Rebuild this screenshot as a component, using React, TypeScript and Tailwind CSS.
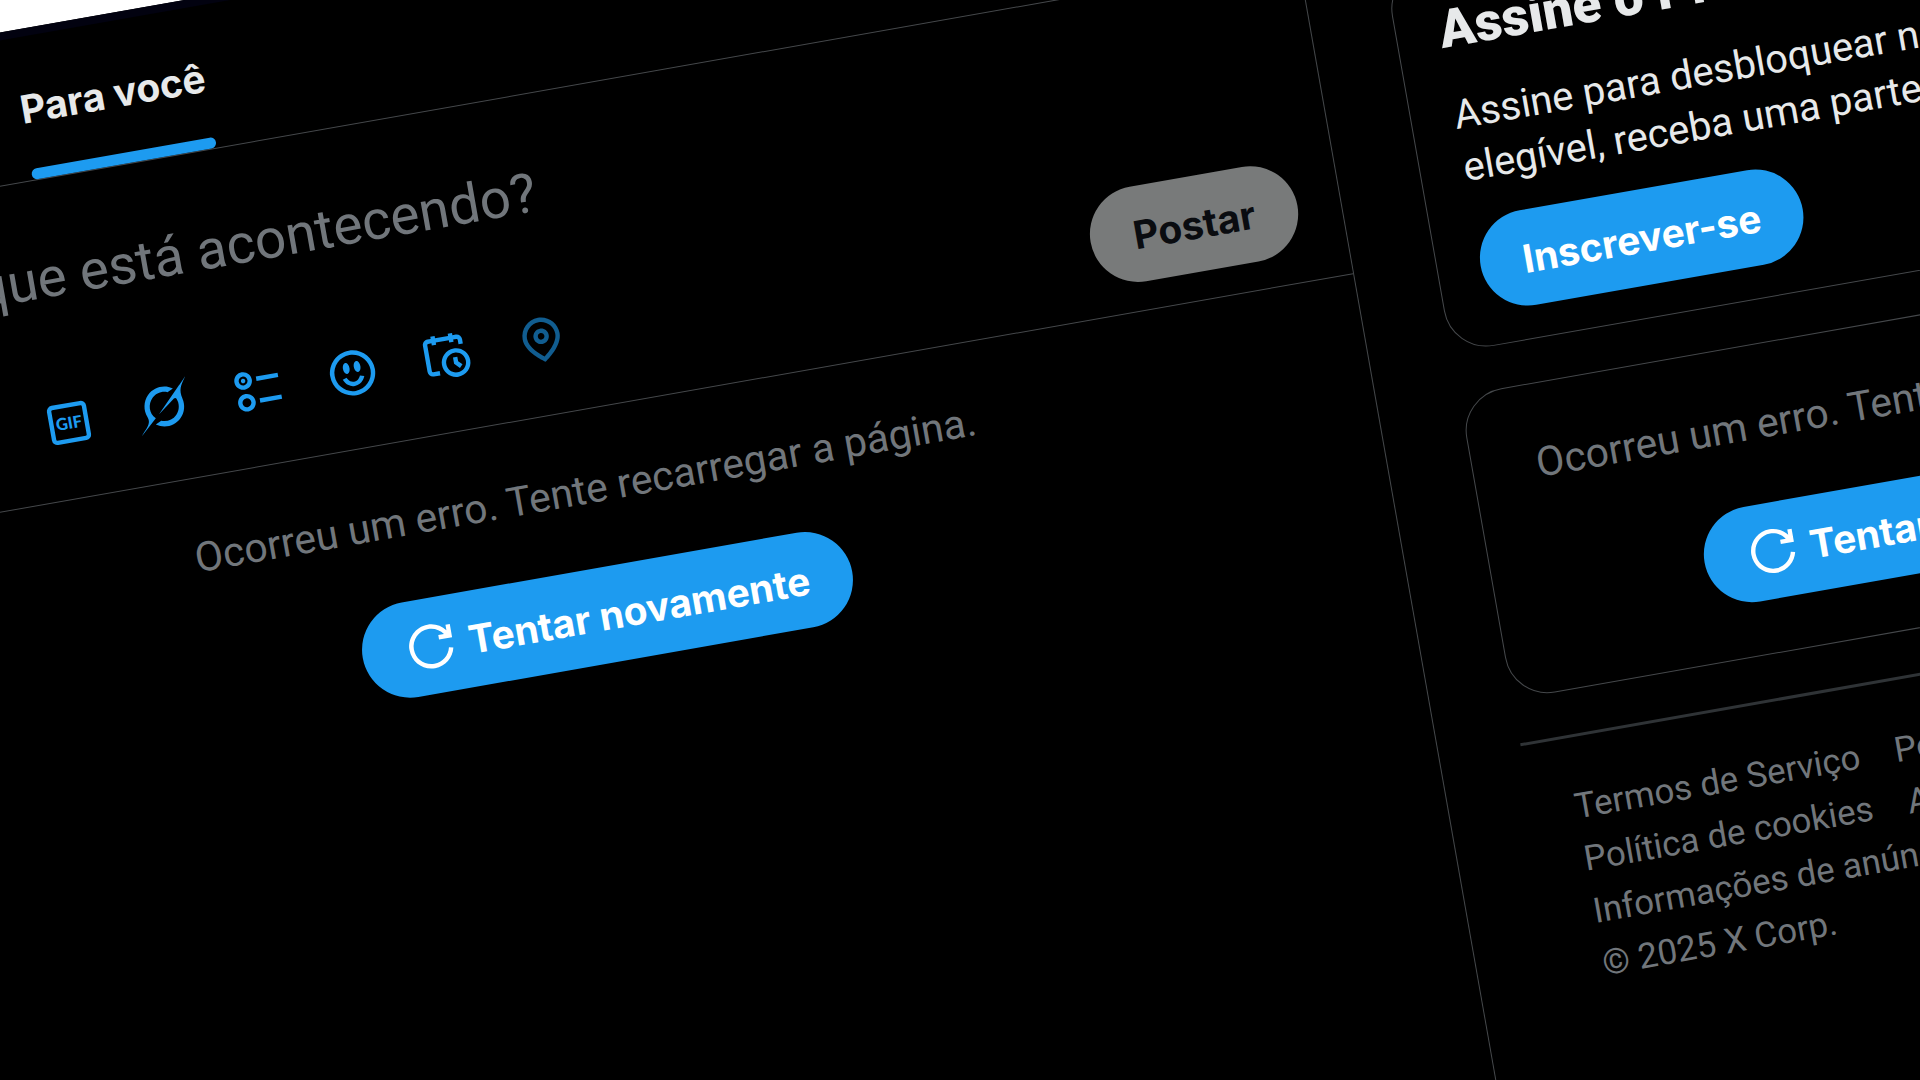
import type { ReactNode } from 'react';

const pill = "h-24 rounded-full px-[43px] flex items-center justify-center gap-[11px] font-['Inter'] text-[39px] font-bold whitespace-nowrap";

function Glyph({ d, viewBox = '0 0 24 24' }: { d: string; viewBox?: string }) {
  return (
    <svg viewBox={viewBox} className="w-[53px] h-[53px] shrink-0 fill-current" aria-hidden="true">
      <path d={d} />
    </svg>
  );
}

const icons = {
  grok: 'M12.745 20.54l10.97-8.19c.539-.4 1.307-.244 1.564.38 1.349 3.288.746 7.241-1.938 9.955-2.683 2.714-6.417 3.31-9.83 1.954l-3.728 1.745c5.347 3.697 11.84 2.782 15.898-1.324 3.219-3.255 4.216-7.692 3.284-11.693l.008.009c-1.351-5.878.332-8.227 3.782-13.031L33 0l-4.54 4.59v-.014L12.743 20.544m-2.263 1.987c-3.837-3.707-3.175-9.446.1-12.755 2.42-2.449 6.388-3.448 9.852-1.979l3.72-1.737c-.67-.49-1.53-1.017-2.515-1.387-4.455-1.854-9.789-.931-13.41 2.728-3.483 3.523-4.579 8.94-2.697 13.561 1.405 3.454-.899 5.898-3.22 8.364C1.49 30.2.666 31.074 0 32l10.478-9.466',
  poll: 'M6 5c-1.1 0-2 .895-2 2s.9 2 2 2 2-.895 2-2-.9-2-2-2zM2 7c0-2.209 1.79-4 4-4s4 1.791 4 4-1.79 4-4 4-4-1.791-4-4zm20 1H12V6h10v2zM6 15c-1.1 0-2 .895-2 2s.9 2 2 2 2-.895 2-2-.9-2-2-2zm-4 2c0-2.209 1.79-4 4-4s4 1.791 4 4-1.79 4-4 4-4-1.791-4-4zm20 1H12v-2h10v2zM7 7c0 .552-.45 1-1 1s-1-.448-1-1 .45-1 1-1 1 .448 1 1z',
  emoji: 'M8 9.5C8 8.119 8.672 7 9.5 7S11 8.119 11 9.5 10.328 12 9.5 12 8 10.881 8 9.5zm6.5 2.5c.828 0 1.5-1.119 1.5-2.5S15.328 7 14.5 7 13 8.119 13 9.5s.672 2.5 1.5 2.5zM12 16c-2.224 0-3.021-2.227-3.051-2.316l-1.897.633c.05.15 1.271 3.684 4.949 3.684s4.898-3.533 4.949-3.684l-1.896-.638c-.033.095-.83 2.322-3.053 2.322zm10.25-4.001c0 5.652-4.598 10.25-10.25 10.25S1.75 17.652 1.75 12 6.348 1.75 12 1.75 22.25 6.348 22.25 12zm-2 0c0-4.549-3.701-8.25-8.25-8.25S3.75 7.451 3.75 12s3.701 8.25 8.25 8.25 8.25-3.701 8.25-8.25z',
  schedule: 'M6 3V2h2v1h6V2h2v1h1.5C18.88 3 20 4.119 20 5.5v2h-2v-2c0-.276-.22-.5-.5-.5H16v1h-2V5H8v1H6V5H4.5c-.28 0-.5.224-.5.5v12c0 .276.22.5.5.5h3v2h-3C3.12 20 2 18.881 2 17.5v-12C2 4.119 3.12 3 4.5 3H6zm9.5 8c-2.49 0-4.5 2.015-4.5 4.5s2.01 4.5 4.5 4.5 4.5-2.015 4.5-4.5-2.01-4.5-4.5-4.5zM9 15.5C9 11.91 11.91 9 15.5 9s6.5 2.91 6.5 6.5-2.91 6.5-6.5 6.5S9 19.09 9 15.5zm5.5-2.5h2v2.086l1.71 1.707-1.42 1.414-2.29-2.293V13z',
  location: 'M12 7c-1.93 0-3.5 1.57-3.5 3.5S10.07 14 12 14s3.5-1.57 3.5-3.5S13.93 7 12 7zm0 5c-.827 0-1.5-.673-1.5-1.5S11.173 9 12 9s1.5.673 1.5 1.5S12.827 12 12 12zm0-10c-4.687 0-8.5 3.813-8.5 8.5 0 5.967 7.621 11.116 7.945 11.332l.555.37.555-.37c.324-.216 7.945-5.365 7.945-11.332C20.5 5.813 16.687 2 12 2zm0 17.77c-1.665-1.241-6.5-5.196-6.5-9.27C5.5 6.916 8.416 4 12 4s6.5 2.916 6.5 6.5c0 4.073-4.835 8.028-6.5 9.27z',
  retry: 'M12 4c-4.418 0-8 3.58-8 8s3.582 8 8 8c3.806 0 6.993-2.66 7.802-6.22l1.95.44C20.742 18.67 16.76 22 12 22 6.477 22 2 17.52 2 12S6.477 2 12 2c3.272 0 6.176 1.57 8 4V3.5h2v6h-6v-2h2.616C17.175 5.39 14.749 4 12 4z',
};

function ToolButton({ label, disabled, children }: { label: string; disabled?: boolean; children: ReactNode }) {
  return (
    <button type="button" aria-label={label} disabled={disabled} className="size-24 flex items-center justify-center text-[#1d9bf0] disabled:opacity-60">
      {children}
    </button>
  );
}

function ErrorState() {
  return (
    <div className="flex flex-col items-center gap-[52px] py-[53px]">
      <p className="text-[41px] text-[#71767b] whitespace-nowrap">Ocorreu um erro. Tente recarregar a página.</p>
      <button type="button" className={`${pill} bg-[#1d9bf0] text-white`}>
        <Glyph d={icons.retry} />
        Tentar novamente
      </button>
    </div>
  );
}

function Compose() {
  return (
    <form className="border-b border-[#45484b] pt-[66px] pb-7 pl-[177px] pr-[43px]" onSubmit={(e) => e.preventDefault()}>
      <textarea rows={1} aria-label="O que está acontecendo?" placeholder="O que está acontecendo?"
        className="block w-full h-16 mb-[66px] resize-none overflow-hidden bg-transparent outline-none text-[55px] leading-[64px] text-[#e7e9ea] placeholder:text-[#71767b]" />
      <div className="flex items-center justify-between">
        <div className="flex ml-[71px]">
          <ToolButton label="GIF">
            <svg viewBox="0 0 24 24" className="w-[53px] h-[53px]" aria-hidden="true">
              <rect x="4" y="4" width="16" height="16" rx="1.5" fill="none" stroke="currentColor" strokeWidth="2" />
              <text x="12" y="14.7" textAnchor="middle" fill="currentColor" className="font-['Lato'] font-black text-[7.5px]">GIF</text>
            </svg>
          </ToolButton>
          <ToolButton label="Grok"><Glyph d={icons.grok} viewBox="0 0 33 32" /></ToolButton>
          <ToolButton label="Enquete"><Glyph d={icons.poll} /></ToolButton>
          <ToolButton label="Emoji"><Glyph d={icons.emoji} /></ToolButton>
          <ToolButton label="Programar"><Glyph d={icons.schedule} /></ToolButton>
          <ToolButton label="Localização" disabled><Glyph d={icons.location} /></ToolButton>
        </div>
        <button type="submit" disabled className={`${pill} bg-[#787a7a] text-[#0a0c10]`}>Postar</button>
      </div>
    </form>
  );
}

const links = [
  ['Termos de Serviço', 'Política de Privacidade'],
  ['Política de cookies', 'Acessibilidade'],
  ['Informações de anúncios', 'Mais'],
];

export default function App() {
  return (
    <div className="h-screen overflow-hidden bg-white">
      <div className="origin-top-left -rotate-10 pt-8 font-['Roboto','Liberation_Sans',sans-serif] text-[40px] leading-[53px] text-[#e7e9ea]">
        <div className="-ml-[302px] w-[135vw] min-h-[150vh] flex gap-[82px] border-t-8 border-[#020210] bg-black">
          <main className="flex-1 border-r border-[#45484b]">
            <nav className="flex h-36 border-b border-[#45484b]">
              <a href="#" className="w-1/2 flex justify-center font-['Inter'] text-[39px] font-bold">
                <span className="relative flex items-center">
                  Para você
                  <span className="absolute inset-x-0 bottom-0 h-[11px] rounded-full bg-[#1d9bf0]" />
                </span>
              </a>
            </nav>
            <Compose />
            <ErrorState />
          </main>

          <aside className="w-[922px] shrink-0 pt-[175px]">
            <section className="rounded-[43px] border border-[#45484b] px-[43px] py-8">
              <h2 className="text-[53px] leading-[64px] font-black">Assine o Premium</h2>
              <p className="mt-7 mb-[25px] whitespace-nowrap">
                Assine para desbloquear novos recursos e, se<br />
                elegível, receba uma parte da receita.
              </p>
              <button type="button" className={`${pill} bg-[#1d9bf0] text-white`}>Inscrever-se</button>
            </section>

            <section className="mt-[43px] rounded-[43px] border border-[#45484b]">
              <ErrorState />
            </section>

            <footer className="mt-11 border-t-3 border-[#2f3336] pt-[43px] pl-[43px] text-[35px] text-[#71767b]">
              {links.map((row) => (
                <div key={row[0]} className="flex gap-[35px]">
                  {row.map((text) => <a key={text} href="#">{text}</a>)}
                </div>
              ))}
              <p>© 2025 X Corp.</p>
            </footer>
          </aside>
        </div>
      </div>
    </div>
  );
}
